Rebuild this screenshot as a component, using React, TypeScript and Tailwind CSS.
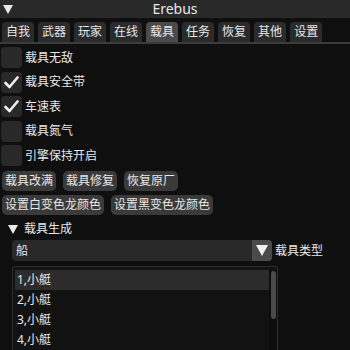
import React from 'react';

const tabs = ['自我', '武器', '玩家', '在线', '载具', '任务', '恢复', '其他', '设置'];

const checks = [
    { label: '载具无敌', on: false },
    { label: '载具安全带', on: true },
    { label: '车速表', on: true },
    { label: '载具氮气', on: false },
    { label: '引擎保持开启', on: false },
];

const items = ['1,小艇', '2,小艇', '3,小艇', '4,小艇'];

const Check: React.FC<{ on: boolean }> = ({ on }) => (
    <div className="w-[21px] h-[21px] rounded-[4px] bg-[#292929] flex items-center justify-center">
        {on && (
            <svg width="15" height="13" viewBox="0 0 15 13">
                <path d="M1.5 7 L5.5 11 L13.5 1.5" fill="none" stroke="#f0f0f0" strokeWidth="2.6" strokeLinecap="round" strokeLinejoin="round" />
            </svg>
        )}
    </div>
);

const Btn: React.FC<{ children: React.ReactNode }> = ({ children }) => (
    <div className="h-[20px] px-[3px] rounded-[5px] bg-[#3a3a3a] flex items-center text-[12px] text-[#e8e8e8]">
        {children}
    </div>
);

const App: React.FC = () => {
    return (
        <div
            className="w-[350px] h-[350px] overflow-hidden bg-[#0f0f0f] text-[#e8e8e8] relative"
            style={{ fontFamily: '"Noto Sans", "Noto Sans CJK SC", sans-serif' }}
        >
            {/* Title bar */}
            <div className="h-[18px] bg-[#292929] flex items-center relative">
                <svg width="10" height="9" viewBox="0 0 10 9" className="absolute left-[3px] top-[5px]">
                    <path d="M0 0 L10 0 L5 9 Z" fill="#e8e8e8" />
                </svg>
                <div className="w-full text-center text-[14px] leading-none">Erebus</div>
            </div>

            {/* Tabs */}
            <div className="mt-[4px] flex gap-[4px] px-[2px] border-b-2 border-[#3b3b3b] h-[22px]">
                {tabs.map(t => (
                    <div
                        key={t}
                        className={`h-[20px] px-[4px] rounded-t-[4px] flex items-center text-[12px] leading-none ${t === '载具' ? 'bg-[#4a4a4a]' : 'bg-[#2b2b2b]'}`}
                    >
                        {t}
                    </div>
                ))}
            </div>

            {/* Checkboxes */}
            <div className="mt-[3px] flex flex-col gap-[3.5px] pl-[1px]">
                {checks.map(c => (
                    <div key={c.label} className="flex items-center gap-[3px] h-[21px]">
                        <Check on={c.on} />
                        <span className="text-[12px]">{c.label}</span>
                    </div>
                ))}
            </div>

            {/* Buttons */}
            <div className="mt-[5px] flex gap-[7px] pl-[2px]">
                <Btn>载具改满</Btn>
                <Btn>载具修复</Btn>
                <Btn>恢复原厂</Btn>
            </div>
            <div className="mt-[4px] flex gap-[7px] pl-[2px]">
                <Btn>设置白变色龙颜色</Btn>
                <Btn>设置黑变色龙颜色</Btn>
            </div>

            {/* Tree node */}
            <div className="mt-[5px] h-[18px] flex items-center pl-[8px] gap-[6px]">
                <svg width="10" height="9" viewBox="0 0 10 9">
                    <path d="M0 0 L10 0 L5 9 Z" fill="#e8e8e8" />
                </svg>
                <span className="text-[12px]">载具生成</span>
            </div>

            {/* Combo */}
            <div className="mt-[2px] ml-[12px] flex items-center gap-[3px]">
                <div className="w-[260px] h-[21px] rounded-[4px] bg-[#292929] flex items-center overflow-hidden">
                    <span className="flex-1 pl-[4px] text-[12px]">船</span>
                    <div className="w-[20px] h-full bg-[#4a4a4a] flex items-center justify-center">
                        <svg width="12" height="11" viewBox="0 0 12 11">
                            <path d="M0 0 L12 0 L6 11 Z" fill="#f0f0f0" />
                        </svg>
                    </div>
                </div>
                <span className="text-[12px]">载具类型</span>
            </div>

            {/* List box */}
            <div className="mt-[5px] ml-[12px] w-[266px] h-[90px] rounded-[3px] border border-[#2e2e2e] bg-[#121212] flex pt-[3px] pl-[2px]">
                <div className="flex-1 flex flex-col">
                    {items.map((it, i) => (
                        <div
                            key={it}
                            className={`h-[20px] flex items-center pl-[2px] text-[12px] ${i === 0 ? 'bg-[#2c2c2c]' : ''}`}
                        >
                            {it}
                        </div>
                    ))}
                </div>
                <div className="w-[8px] h-full bg-[#0d0d0d] flex justify-center">
                    <div className="w-[5px] h-[48px] mt-[1px] rounded-full bg-[#4a4a4a]" />
                </div>
            </div>
        </div>
    );
};

export default App;
